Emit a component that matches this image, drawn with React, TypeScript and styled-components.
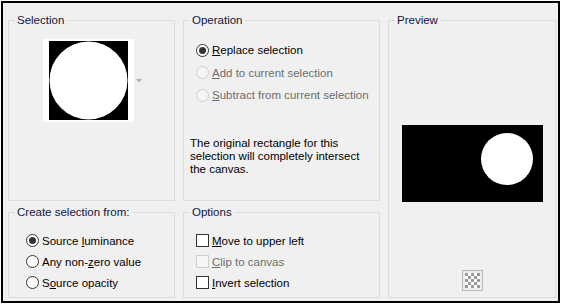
import styled, { createGlobalStyle } from 'styled-components'

const GlobalStyle = createGlobalStyle`
	html, body {
		margin: 0;
		padding: 0;
		background: #ffffff;
	}
	body {
		font-family: 'Liberation Sans', Arial, sans-serif;
		font-size: 11.5px;
		color: #000000;
	}
`

type Choice = { label: string; key: number; checked?: boolean; disabled?: boolean }

const operations: Choice[] = [
	{ label: 'Replace selection', key: 0, checked: true },
	{ label: 'Add to current selection', key: 0, disabled: true },
	{ label: 'Subtract from current selection', key: 0, disabled: true },
]

const sources: Choice[] = [
	{ label: 'Source luminance', key: 7, checked: true },
	{ label: 'Any non-zero value', key: 8 },
	{ label: 'Source opacity', key: 1 },
]

const options: Choice[] = [
	{ label: 'Move to upper left', key: 0 },
	{ label: 'Clip to canvas', key: 0, disabled: true },
	{ label: 'Invert selection', key: 0 },
]

const Label = ({ text, at }: { text: string; at: number }) => (
	<span>
		{text.slice(0, at)}
		<Key>{text[at]}</Key>
		{text.slice(at + 1)}
	</span>
)

const Checker = () => (
	<svg width='21' height='21' viewBox='0 0 21 21'>
		<rect x='0.5' y='0.5' width='20' height='20' fill='#ececec' stroke='#b9b9b9' />
		{Array.from({ length: 25 }).map((_, i) => {
			const r = Math.floor(i / 5)
			const c = i % 5
			return <rect key={i} x={3 + c * 3} y={3 + r * 3} width='3' height='3' fill={(r + c) % 2 === 0 ? '#9a9a9a' : '#ffffff'} />
		})}
	</svg>
)

export default function App() {
	return (
		<>
			<GlobalStyle />
			<Frame>
				<Group>
					<Title>Selection</Title>
					<ThumbRow>
						<Thumb>
							<svg width='79' height='79' viewBox='0 0 79 79'>
								<rect width='79' height='79' fill='#000' />
								<circle cx='39.5' cy='39.5' r='39' fill='#fff' />
							</svg>
						</Thumb>
						<svg width='6' height='4' viewBox='0 0 6 4'>
							<polygon points='0,0 6,0 3,3.5' fill='#b0b0b0' />
						</svg>
					</ThumbRow>
				</Group>

				<Group>
					<Title>Operation</Title>
					<ChoiceList $top={12} $left={12}>
						{operations.map(o => (
							<Option key={o.label} $height={22.5} $disabled={o.disabled}>
								<Radio $checked={o.checked} $disabled={o.disabled} />
								<Label text={o.label} at={o.key} />
							</Option>
						))}
					</ChoiceList>
					<Note>
						The original rectangle for this
						<br />
						selection will completely intersect
						<br />
						the canvas.
					</Note>
				</Group>

				<Group $span>
					<Title>Preview</Title>
					<PreviewBody>
						<PreviewImage>
							<svg width='141' height='77' viewBox='0 0 141 77'>
								<rect width='141' height='77' fill='#000' />
								<circle cx='105' cy='34' r='26' fill='#fff' />
							</svg>
						</PreviewImage>
						<Checker />
					</PreviewBody>
				</Group>

				<Group>
					<Title>Create selection from:</Title>
					<ChoiceList $top={11} $left={17}>
						{sources.map(o => (
							<Option key={o.label} $height={21}>
								<Radio $checked={o.checked} />
								<Label text={o.label} at={o.key} />
							</Option>
						))}
					</ChoiceList>
				</Group>

				<Group>
					<Title>Options</Title>
					<ChoiceList $top={11} $left={12}>
						{options.map(o => (
							<Option key={o.label} $height={21} $disabled={o.disabled}>
								<Check $disabled={o.disabled} />
								<Label text={o.label} at={o.key} />
							</Option>
						))}
					</ChoiceList>
				</Group>
			</Frame>
		</>
	)
}

const Frame = styled.div`
	box-sizing: border-box;
	width: 559px;
	height: 302px;
	margin: 1px 0 0 1px;
	border: 2px solid #000;
	background: #f0f0f0;
	padding: 10px 0 0 5px;
	display: grid;
	grid-template-columns: 167px 197px 168px;
	grid-template-rows: 188px 93px;
	column-gap: 8px;
	row-gap: 4px;
`
const Group = styled.fieldset<{ $span?: boolean }>`
	margin: 0;
	padding: 0;
	min-width: 0;
	border: 1px solid #dcdcdc;
	grid-row: ${p => (p.$span ? 'span 2' : 'auto')};
	display: flex;
	flex-direction: column;
`
const Title = styled.legend`
	margin-left: 6px;
	padding: 0 2px;
	line-height: 14px;
	color: #14143a;
`
const ThumbRow = styled.div`
	display: flex;
	align-items: center;
	gap: 2px;
	margin: 12px 0 0 34px;
`
const Thumb = styled.div`
	width: 91px;
	height: 83px;
	box-sizing: border-box;
	padding: 2px 6px;
	background: #ffffff;
	svg {
		display: block;
	}
`
const ChoiceList = styled.div<{ $top: number; $left: number }>`
	display: flex;
	flex-direction: column;
	margin: ${p => p.$top}px 0 0 ${p => p.$left}px;
`
const Option = styled.label<{ $height: number; $disabled?: boolean }>`
	display: flex;
	align-items: center;
	gap: 3px;
	height: ${p => p.$height}px;
	color: ${p => (p.$disabled ? '#6d6d6d' : '#000000')};
	white-space: nowrap;
`
const Key = styled.span`
	text-decoration: underline;
`
const Radio = styled.span<{ $checked?: boolean; $disabled?: boolean }>`
	box-sizing: border-box;
	width: 13px;
	height: 13px;
	flex: none;
	border-radius: 50%;
	border: 1px solid ${p => (p.$disabled ? '#cfcfcf' : '#333333')};
	background: ${p => (p.$disabled ? '#f4f4f4' : '#ffffff')};
	display: flex;
	align-items: center;
	justify-content: center;
	&::after {
		content: '';
		width: 7px;
		height: 7px;
		border-radius: 50%;
		background: #333333;
		display: ${p => (p.$checked ? 'block' : 'none')};
	}
`
const Check = styled.span<{ $disabled?: boolean }>`
	box-sizing: border-box;
	width: 13px;
	height: 13px;
	flex: none;
	border: 1px solid ${p => (p.$disabled ? '#cfcfcf' : '#333333')};
	background: ${p => (p.$disabled ? '#f6f6f6' : '#ffffff')};
`
const Note = styled.p`
	margin: 30px 0 0 6px;
	line-height: 13px;
`
const PreviewBody = styled.div`
	display: flex;
	flex-direction: column;
	align-items: center;
	svg {
		display: block;
	}
`
const PreviewImage = styled.div`
	margin: 98px 0 68px;
`
